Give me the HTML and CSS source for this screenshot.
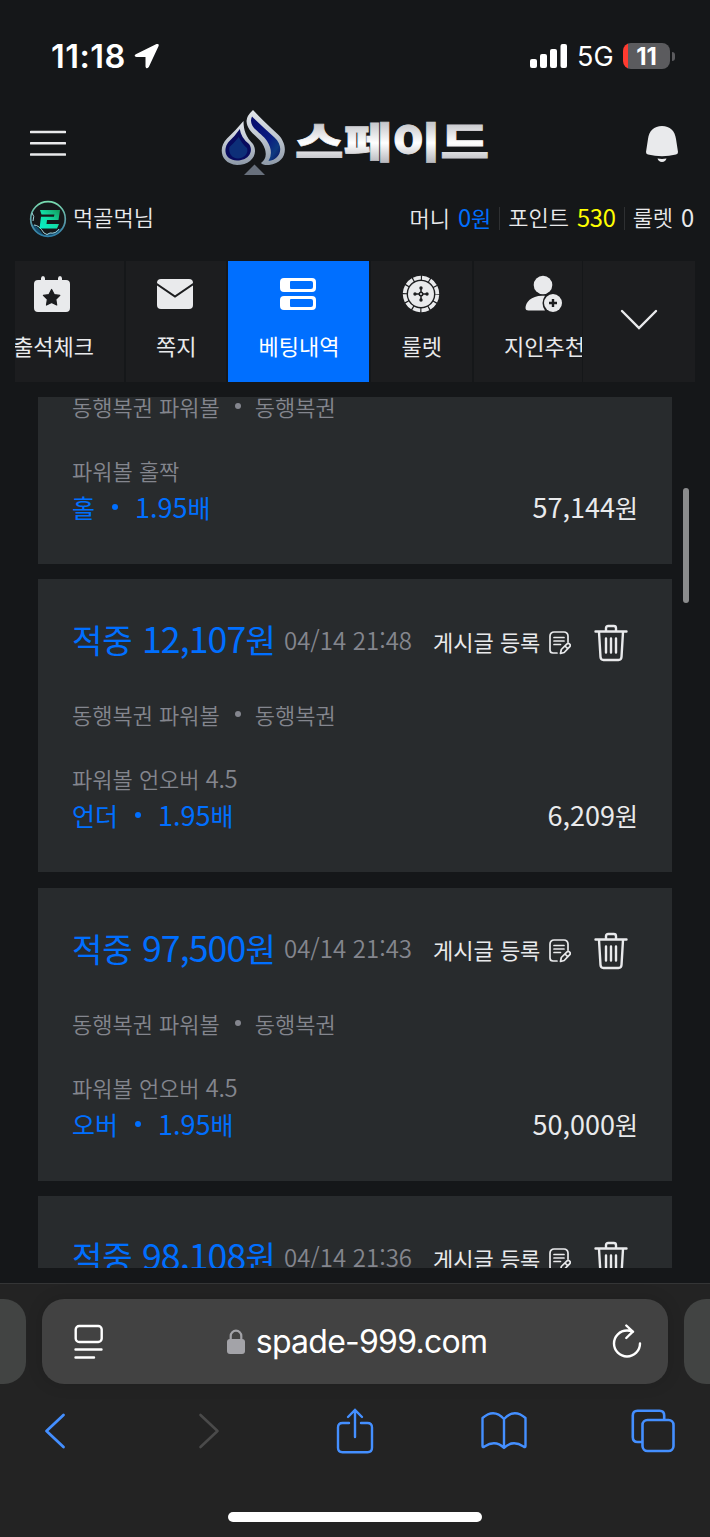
FILE: index.html
```html
<!DOCTYPE html>
<html lang="ko">
<head>
    <meta charset="UTF-8">
    <meta name="viewport" content="width=device-width, initial-scale=1.0">
    <title>스페이드 - 베팅내역</title>
    <link rel="stylesheet" href="styles.css">
</head>
<body>
    <svg class="sprite">
        <symbol id="i-note" viewBox="0 0 22 24">
            <path d="M19 11V5a4 4 0 0 0-4-4H5a4 4 0 0 0-4 4v14a3 3 0 0 0 3 3h4M5 6.500h10M5 10h10M5 13.500h6.500M11.500 22.500l.8-4 5.700-5.600a2 2 0 0 1 2.800 2.800l-5.600 5.800zM16 15l2.500 2.500" fill="none" stroke="currentColor" stroke-width="1.700" stroke-linecap="round" stroke-linejoin="round"/>
        </symbol>
        <symbol id="i-trash" viewBox="0 0 34 38">
            <path d="M1.500 7.500h31M12 7V4.200Q12 2 14.200 2h5.600Q22 2 22 4.200V7M5 8l1.500 25q.2 3 3 3h15q2.800 0 3-3L29 8M12 14.500v14M17 14.500v14M22 14.500v14" fill="none" stroke="currentColor" stroke-width="2.400" stroke-linecap="round"/>
        </symbol>
    </svg>

    <div class="status">
        <div class="status-time">11:18</div>
        <svg class="status-loc" width="26" height="26" viewBox="0 0 26 26"><path d="M1.800 11.300 22.500 1.100q2.800-.9 2.100 1.900L14.800 24q-2.600 3-3.300-.6V14H2.600Q-.8 13.200 1.800 11.300z" fill="#fff"/></svg>
        <div class="status-right">
            <svg width="38" height="24" viewBox="0 0 38 24" fill="#fff"><rect x="0" y="15" width="7" height="9" rx="2"/><rect x="10" y="10" width="7" height="14" rx="2"/><rect x="20" y="5" width="7" height="19" rx="2"/><rect x="30.500" y="0" width="6.500" height="24" rx="2"/></svg>
            <span class="status-net">5G</span>
            <div class="battery"><span>11</span></div>
            <div class="battery-tip"></div>
        </div>
    </div>

    <header class="header">
        <svg class="menu" width="36" height="28" viewBox="0 0 36 28"><path d="M1 2h34M1 13.300h34M1 24.500h34" stroke="#e9eaec" stroke-width="2.600" stroke-linecap="round"/></svg>
        <svg class="logo" width="270" height="68" viewBox="0 0 270 68">
            <defs>
                <linearGradient id="silver" x1="0" y1="0" x2="0" y2="1"><stop offset="0" stop-color="#e3e7ec"/><stop offset=".45" stop-color="#c3cad3"/><stop offset="1" stop-color="#8d99a8"/></linearGradient>
                <linearGradient id="navy" x1="0" y1="0" x2="1" y2="1"><stop offset="0" stop-color="#080c6b"/><stop offset=".55" stop-color="#0a1a80"/><stop offset=".8" stop-color="#0d3a80"/><stop offset="1" stop-color="#07095a"/></linearGradient>
                <linearGradient id="letters" gradientUnits="userSpaceOnUse" x1="0" y1="14" x2="0" y2="52"><stop offset="0" stop-color="#c8c9cd"/><stop offset=".5" stop-color="#ffffff"/><stop offset="1" stop-color="#b9babf"/></linearGradient>
            </defs>
            <path d="M23.500 11Q16 20 7 28.500C-2 37 0 54 17 55C31 55 39 44 33 34C26 27 23.500 20 23.500 11z" fill="url(#silver)"/>
            <path d="M19.800 19Q15 26 9 31.500C3 38 4 50 17 50.500C29 50.500 34 41 29 34Q21 28 19.800 19z" fill="#080b5e"/>
            <path d="M18.800 27Q14 33 9.500 37C8 43 12 48.500 18 48.500C24 48.500 29 43 27 38Q22 34 18.800 27z" fill="#0d2f78"/>
            <path d="M33 0Q42 10 57 23.500C69 34 68 53 49 55Q43 55.500 41 53Q50 46 42 33C36 25 27 21 26.500 11Q26.500 6 33 0z" fill="url(#silver)"/>
            <path d="M32 6.500Q43 17 54.500 27.500C65 37 60 50 48.500 51Q54 42 47 31C42 23 27 17 32 6.500z" fill="url(#navy)"/>
            <path d="M34.500 54.500 45 65H24z" fill="#68707c"/>
            <text class="logo-text" x="75" y="48" textLength="194" lengthAdjust="spacingAndGlyphs" fill="url(#letters)">스페이드</text>
        </svg>
        <svg class="bell" width="34" height="38" viewBox="0 0 34 38" fill="#e9eaec"><path d="M17 1C25 1 30 6 31 14l2 13q0 2-2 2.500Q17 33 3 29.500 1 29 1 27L3 14C4 6 9 1 17 1z"/><path d="M12.500 33.600q4.500.9 9 0-1 3.400-4.500 3.400t-4.500-3.400z"/></svg>
    </header>

    <div class="user">
        <svg class="avatar" width="38" height="38" viewBox="0 0 38 38">
            <defs><linearGradient id="ring" x1="0" y1="0" x2="0" y2="1"><stop offset="0" stop-color="#79dcb0"/><stop offset=".55" stop-color="#5c9ca8"/><stop offset="1" stop-color="#2f7ea6"/></linearGradient>
            <linearGradient id="two" x1="0" y1="1" x2="1" y2="0"><stop offset="0" stop-color="#06efca"/><stop offset=".5" stop-color="#12dca4"/><stop offset="1" stop-color="#129a5a"/></linearGradient></defs>
            <path d="M2 24q6 1 11 9 3 4 7 0 5 1 8-3 4-1 6-3-4 9-15 10Q6 36 2 24z" fill="#124a6c"/>
            <circle cx="19" cy="19" r="17.300" fill="none" stroke="url(#ring)" stroke-width="1.700"/>
            <path d="M3 13q3 3 1 8M5 25q5 0 10 8 3 3 6 0 6 1 9-4" fill="none" stroke="#a4d5dc" stroke-width="1"/>
            <path d="M11 10h20l-1.500 10H18l-.5 4H30l-2 4.500H10.500L12 16.800h13l.4-2.300H12.500z" fill="url(#two)"/>
        </svg>
        <span class="user-name">먹골먹님</span>
        <div class="wallet">
            <span class="wallet-label">머니</span><b class="money"><i class="num">0</i>원</b>
            <span class="wallet-cell">포인트</span><b class="point"><i class="num">530</i></b>
            <span class="wallet-cell">룰렛</span><b><i class="num">0</i></b>
        </div>
    </div>

    <nav class="nav">
        <div class="nav-scroll">
            <div class="nav-list">
                <a class="nav-item">
                    <svg width="38" height="38" viewBox="0 0 38 38"><path d="M5 5h3V3.500Q8 1 10 1t2 2.500V5h13V3.500Q25 1 27 1t2 2.500V5h4q4 0 4 4v24q0 4-4 4H5q-4 0-4-4V9q0-4 4-4z" fill="#e9eaec"/><path d="m18.600 14.500 2.600 5 5.600.9-4 4 .9 5.600-5.100-2.600-5.100 2.600.9-5.600-4-4 5.600-.9z" fill="#1c1d1f" stroke="#1c1d1f" stroke-width="1.200" stroke-linejoin="round"/></svg>
                    <span>출석체크</span>
                </a>
                <a class="nav-item">
                    <svg width="38" height="38" viewBox="0 0 38 38"><rect x="1" y="4" width="36" height="30" rx="4" fill="#e9eaec"/><path d="M0 8.500 19 21.500 38 8.500" fill="none" stroke="#1c1d1f" stroke-width="2"/></svg>
                    <span>쪽지</span>
                </a>
                <a class="nav-item active">
                    <svg width="38" height="38" viewBox="0 0 38 38"><path fill-rule="evenodd" fill="#fff" d="M5 3h28q4 0 4 4v6q0 4-4 4H5q-4 0-4-4V7q0-4 4-4zm7 3q-1 0-1 1v6q0 1 1 1h20q2 0 2-2V8q0-2-2-2zM5 21h28q4 0 4 4v6q0 4-4 4H5q-4 0-4-4v-6q0-4 4-4zm7 3q-1 0-1 1v6q0 1 1 1h20q2 0 2-2v-4q0-2-2-2z"/></svg>
                    <span>베팅내역</span>
                </a>
                <a class="nav-item">
                    <svg width="38" height="38" viewBox="0 0 38 38"><circle cx="19" cy="19" r="16.300" fill="none" stroke="#e9eaec" stroke-width="3.800" stroke-dasharray="7.330 1.200" stroke-dashoffset="-.6"/><circle cx="19" cy="19" r="13" fill="#e9eaec"/><path d="M19 13v12M13 19h12" stroke="#1c1d1f" stroke-width="1.500"/><circle cx="19" cy="19" r="2.500" fill="#1c1d1f"/><circle cx="19" cy="19" r="1" fill="#e9eaec"/><g fill="#1c1d1f"><circle cx="19" cy="13" r="1.700"/><circle cx="19" cy="25" r="1.700"/><circle cx="13" cy="19" r="1.700"/><circle cx="25" cy="19" r="1.700"/></g></svg>
                    <span>룰렛</span>
                </a>
                <a class="nav-item">
                    <svg width="38" height="38" viewBox="0 0 38 38" fill="#e9eaec"><circle cx="19" cy="10" r="9.300"/><path d="M21 20.800C8 19.500 1.500 27 1.500 33q0 2.500 3 2.500H21Q16 28 21 20.800z"/><circle cx="29" cy="28" r="9"/><path d="M29 24v8M25 28h8" stroke="#1c1d1f" stroke-width="2.400"/></svg>
                    <span>지인추천</span>
                </a>
            </div>
        </div>
        <div class="nav-more">
            <svg width="38" height="22" viewBox="0 0 38 22"><path d="M2 2l17 17L36 2" fill="none" stroke="#e9eaec" stroke-width="2.400" stroke-linecap="round"/></svg>
        </div>
    </nav>

    <main class="bets">
        <div class="bet-list">
            <article class="bet">
                <div class="bet-head"></div>
                <p class="league">동행복권 파워볼<em></em>동행복권</p>
                <p class="market">파워볼 홀짝</p>
                <div class="bet-foot"><span class="pick">홀<em></em><i class="num">1.95</i>배</span><span><i class="num">57,144</i>원</span></div>
            </article>
            <article class="bet">
                <div class="bet-head">
                    <strong>적중 <i class="num">12,107</i>원</strong>
                    <time>04/14 21:48</time>
                    <div class="post"><span>게시글 등록</span><svg width="22" height="24"><use href="#i-note"/></svg></div>
                    <svg class="trash" width="34" height="38"><use href="#i-trash"/></svg>
                </div>
                <p class="league">동행복권 파워볼<em></em>동행복권</p>
                <p class="market">파워볼 언오버 <i class="num">4.5</i></p>
                <div class="bet-foot"><span class="pick">언더<em></em><i class="num">1.95</i>배</span><span><i class="num">6,209</i>원</span></div>
            </article>
            <article class="bet">
                <div class="bet-head">
                    <strong>적중 <i class="num">97,500</i>원</strong>
                    <time>04/14 21:43</time>
                    <div class="post"><span>게시글 등록</span><svg width="22" height="24"><use href="#i-note"/></svg></div>
                    <svg class="trash" width="34" height="38"><use href="#i-trash"/></svg>
                </div>
                <p class="league">동행복권 파워볼<em></em>동행복권</p>
                <p class="market">파워볼 언오버 <i class="num">4.5</i></p>
                <div class="bet-foot"><span class="pick">오버<em></em><i class="num">1.95</i>배</span><span><i class="num">50,000</i>원</span></div>
            </article>
            <article class="bet">
                <div class="bet-head">
                    <strong>적중 <i class="num">98,108</i>원</strong>
                    <time>04/14 21:36</time>
                    <div class="post"><span>게시글 등록</span><svg width="22" height="24"><use href="#i-note"/></svg></div>
                    <svg class="trash" width="34" height="38"><use href="#i-trash"/></svg>
                </div>
            </article>
        </div>
        <div class="scrollbar"></div>
    </main>

    <footer class="browser">
        <div class="tabs">
            <div class="tab-prev"></div>
            <div class="address">
                <svg width="30" height="36" viewBox="0 0 30 36" fill="none" stroke="#fff" stroke-width="2.400" stroke-linecap="round"><rect x="1.700" y="2" width="26" height="16" rx="3.500"/><path d="M1.500 25.500h26M1.500 33.500h18.500"/></svg>
                <div class="url">
                    <svg width="18" height="26" viewBox="0 0 18 26"><rect x="0" y="10" width="18" height="15" rx="3" fill="#a3a3a8"/><path d="M3.700 12V7a5.300 5.300 0 0 1 10.600 0v5" fill="none" stroke="#a3a3a8" stroke-width="2.200"/></svg>
                    <span>spade-999.com</span>
                </div>
                <svg width="30" height="36" viewBox="0 0 30 36" fill="none" stroke="#fff" stroke-width="2.400" stroke-linecap="round" stroke-linejoin="round"><path d="M28 19.500A13 13 0 1 1 15 6.500q3 0 6 1.200M14.300 1.500l6.500 6.200-6.500 6.300"/></svg>
            </div>
            <div class="tab-next"></div>
        </div>
        <div class="toolbar">
            <svg width="22" height="36" viewBox="0 0 22 36"><path d="M19.500 2 2.500 18l17 16" fill="none" stroke="#448fff" stroke-width="2.800" stroke-linecap="round" stroke-linejoin="round"/></svg>
            <svg width="22" height="36" viewBox="0 0 22 36"><path d="M2.500 2l17 16-17 16" fill="none" stroke="#4a4a4a" stroke-width="2.600" stroke-linecap="round" stroke-linejoin="round"/></svg>
            <svg width="38" height="46" viewBox="0 0 38 46" fill="none" stroke="#448fff" stroke-width="2.400" stroke-linecap="round"><path d="M13 15H6.500Q2 15 2 19.500v20.300Q2 44.300 6.500 44.300h25q4.500 0 4.500-4.500V19.500Q36 15 31.500 15H25M19 29V2.500M12 9l7-7 7 7"/></svg>
            <svg width="46" height="40" viewBox="0 0 46 40" fill="none" stroke="#448fff" stroke-width="2.400" stroke-linejoin="round"><path d="M23 8Q13-3 1.500 7v28q0 2 2 .5 11-7 19.500 1.500 8.500-8.500 19.500-1.500 2 1.500 2-.5V7Q33-3 23 8zM23 8v29"/></svg>
            <svg width="44" height="44" viewBox="0 0 44 44" fill="none" stroke="#448fff" stroke-width="2.600"><path d="M11 33H6.500Q1.800 33 1.800 28.300V6.500Q1.800 1.800 6.500 1.800h22q4.700 0 4.700 4.700V11"/><rect x="11.500" y="11" width="31" height="31" rx="5"/></svg>
        </div>
        <div class="home"></div>
    </footer>
</body>
</html>
```
FILE: styles.css
```css
* {
    box-sizing: border-box;
}
body {
    margin: 0;
    height: 1537px;
    display: flex;
    flex-direction: column;
    overflow: hidden;
    background-color: #151719;
    color: #e9eaec;
    font-family: "Noto Sans CJK KR", sans-serif;
    font-size: 22px;
}
svg {
    display: block;
    flex: none;
}
i {
    font-style: normal;
}
.sprite {
    position: absolute;
    width: 0;
    height: 0;
}
/* digits are a little taller than the hangul */
.num {
    font-size: 1.08em;
    letter-spacing: -0.3px;
}

.status {
    height: 112px;
    display: flex;
    align-items: center;
    padding: 0 35px 0 51px;
    font-family: Inter, sans-serif;
    color: #fff;
}
.status-time {
    font-size: 32.500px;
    font-weight: 600;
    letter-spacing: 0.5px;
    width: 83px;
}
.status-right {
    margin-left: auto;
    display: flex;
    align-items: center;
}
.status-net {
    font-size: 27px;
    font-weight: 400;
    margin-left: 9px;
    width: 46px;
}
.battery {
    width: 47px;
    height: 26px;
    border-radius: 8px;
    background: linear-gradient(to right, #ff3b30 5px, #5b5b5e 5px);
    font-size: 24px;
    font-weight: 700;
    line-height: 27px;
    text-align: center;
}
.battery-tip {
    width: 3px;
    height: 9px;
    margin-left: 2px;
    border-radius: 0 3px 3px 0;
    background-color: #5b5b5e;
}

.header {
    height: 68px;
    display: flex;
    align-items: center;
    padding: 0 31px 5px 30px;
}
.logo {
    margin-left: 154px;
}
.logo-text {
    font-size: 42px;
    font-weight: 900;
    stroke: url(#letters);
    stroke-width: 0.8px;
}
.bell {
    margin-left: auto;
}

.user {
    height: 77px;
    display: flex;
    align-items: center;
    padding: 0 16px 0 29px;
    font-weight: 350;
}
.user-name {
    margin-left: 6px;
    padding-bottom: 5px;
}
.wallet {
    margin-left: auto;
    display: flex;
    align-items: center;
}
.wallet-label {
    padding-bottom: 4px;
}
.wallet b {
    font-weight: 400;
    margin-left: 8px;
    padding-bottom: 4px;
}
.wallet .money {
    color: #006fff;
}
.wallet .point {
    color: #ffff00;
}
.wallet-cell {
    margin-left: 8px;
    padding: 0 0 4px 8px;
    line-height: 19px;
    border-left: 1px solid #2e3032;
}

.nav {
    height: 121px;
    margin: 4px 15px 0;
    display: flex;
    gap: 1px;
}
.nav-scroll {
    width: 567px;
    overflow: hidden;
}
.nav-list {
    display: flex;
    gap: 2px;
    width: max-content;
    margin-left: -32px;
}
.nav-item {
    height: 121px;
    padding: 14px 30px 0;
    display: flex;
    flex-direction: column;
    align-items: center;
    gap: 16px;
    background-color: #1c1d1f;
    font-weight: 400;
    line-height: 32px;
}
.nav-item svg {
    margin-left: -2px;
}
.nav-item.active {
    background-color: #006fff;
    color: #fff;
}
.nav-more {
    flex: 1;
    display: flex;
    align-items: center;
    justify-content: center;
    padding-bottom: 4px;
    background-color: #1c1d1f;
}

.bets {
    position: relative;
    height: 871px;
    margin: 15px 38px 0;
    flex: none;
}
.bet-list {
    height: 871px;
    overflow: hidden;
    display: flex;
    flex-direction: column;
    gap: 15.200px;
}
.bet {
    flex: none;
    height: 293.300px;
    padding: 38px 34px 35px;
    background-color: #282b2d;
}
.bet:first-child {
    margin-top: -126.300px;
}
.bet-head {
    height: 50px;
    display: grid;
    grid-template-columns: 212px 149px 161px 34px;
    align-items: center;
}
.bet-head strong {
    padding-bottom: 8px;
    color: #006fff;
    font-size: 33px;
    font-weight: 400;
    line-height: 42px;
    white-space: nowrap;
}
.bet-head strong .num {
    letter-spacing: -0.9px;
}
.bet-head time {
    padding-bottom: 6px;
    color: #84868e;
    font-size: 24px;
    font-weight: 350;
    line-height: 30px;
    white-space: nowrap;
}
.post {
    display: flex;
    align-items: center;
    gap: 9px;
}
.post span {
    padding-bottom: 4px;
    line-height: 30px;
}
.bet p {
    margin: 0;
    height: 34px;
    padding-bottom: 4px;
    line-height: 30px;
    display: flex;
    align-items: center;
    white-space: pre;
    color: #84868e;
    font-weight: 350;
}
.bet .league {
    margin-top: 32px;
}
.bet .market {
    margin-top: 30px;
}
.bet em {
    width: 6px;
    height: 6px;
    margin: 0 14px 0 15px;
    border-radius: 50%;
    background-color: currentColor;
}
.bet-foot {
    height: 40px;
    padding-bottom: 4px;
    display: flex;
    align-items: center;
    justify-content: space-between;
    font-size: 25px;
    line-height: 36px;
}
.bet-foot .num {
    letter-spacing: 0;
}
.pick {
    display: flex;
    align-items: center;
    color: #006fff;
}
.bet .pick em {
    margin: 0 17px;
}
.scrollbar {
    position: absolute;
    top: 91px;
    right: -17px;
    width: 6px;
    height: 115px;
    border-radius: 3px;
    background-color: #8b8c8d;
}

.browser {
    margin-top: auto;
    height: 254px;
    flex: none;
    border-top: 1px solid #343536;
    background-color: #232323;
}
.tabs {
    display: flex;
    gap: 16px;
    height: 85px;
    margin-top: 15px;
}
.tab-prev,
.tab-next {
    width: 26px;
    background-color: #424443;
}
.tab-prev {
    border-radius: 0 22px 22px 0;
}
.tab-next {
    border-radius: 22px 0 0 22px;
}
.address {
    flex: 1;
    display: flex;
    align-items: center;
    justify-content: space-between;
    padding: 0 26px 0 32px;
    border-radius: 22px;
    background-color: #424242;
    box-shadow: 0 0 16px rgba(0, 0, 0, 0.15);
}
.url {
    display: flex;
    align-items: center;
    gap: 11px;
    margin-right: 2px;
    color: #fff;
    font-family: Inter, sans-serif;
    font-size: 32px;
    letter-spacing: -0.75px;
}
.toolbar {
    height: 94px;
    display: grid;
    grid-template-columns: 110px 197px 96px 201px 98px;
    align-items: center;
    justify-items: center;
}
.home {
    width: 254px;
    height: 10px;
    margin: 34px auto 0;
    border-radius: 5px;
    background-color: #fff;
}
```
